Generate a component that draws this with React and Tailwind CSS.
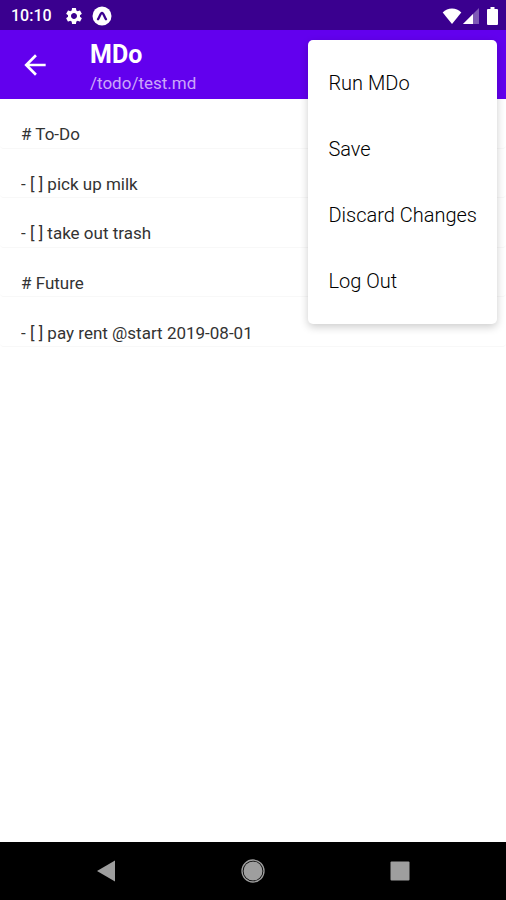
import { useState } from "react";
import { MdArrowBack, MdSettings } from "react-icons/md";

const initialLines = [
  "# To-Do",
  "- [ ] pick up milk",
  "- [ ] take out trash",
  "# Future",
  "- [ ] pay rent @start 2019-08-01",
];

const menuItems = ["Run MDo", "Save", "Discard Changes", "Log Out"];

const StatusBar = () => (
  <div className="flex h-[30px] items-center bg-[#3a008f] pl-[11px] pr-2 pt-px text-white">
    <span className="text-base font-medium leading-5">10:10</span>
    <MdSettings className="ml-3 size-5" />
    <svg viewBox="0 0 20 20" className="ml-2 size-5">
      <circle cx="10" cy="10" r="9.5" fill="white" />
      <path
        d="M6 13.2C7.600 11.400 8.300 7 10 7s2.400 4.400 4 6.200"
        fill="none"
        stroke="#3a008f"
        strokeWidth="2.400"
        strokeLinecap="round"
      />
    </svg>
    <svg viewBox="0 0 20 16" className="ml-auto h-4 w-5">
      <path d="M10 16 .7 4.4C3.200 2 6.500.6 10 .6s6.800 1.400 9.300 3.800z" fill="white" />
    </svg>
    <svg viewBox="0 0 16 16" className="ml-px h-4 w-4">
      <path d="M0 16 16 0v16z" fill="white" opacity="0.35" />
      <path d="M0 16 10 6v10z" fill="white" />
    </svg>
    <svg viewBox="0 0 11 18" className="ml-2 h-[18px] w-[11px]">
      <path d="M3.500 0h4v2H10a1 1 0 0 1 1 1v14a1 1 0 0 1-1 1H1a1 1 0 0 1-1-1V3a1 1 0 0 1 1-1h2.500z" fill="white" />
    </svg>
  </div>
);

const NavBar = () => (
  <nav className="flex h-[58px] items-center justify-center gap-[125px] bg-black text-[#9e9e9e]">
    <button type="button" aria-label="Back">
      <svg viewBox="0 0 20 22" className="h-[22px] w-5" fill="currentColor">
        <path d="M19 .500v21L1 11z" />
      </svg>
    </button>
    <button type="button" aria-label="Home">
      <svg viewBox="0 0 24 24" className="size-6" fill="currentColor">
        <circle cx="12" cy="12" r="11" fill="none" stroke="currentColor" strokeWidth="1.300" />
        <circle cx="12" cy="12" r="9.500" />
      </svg>
    </button>
    <button type="button" aria-label="Overview">
      <svg viewBox="0 0 20 20" className="size-5" fill="currentColor">
        <rect x="0.500" y="0.500" width="19" height="19" rx="1" />
      </svg>
    </button>
  </nav>
);

const App = () => {
  const [lines, setLines] = useState(initialLines);
  const [menuOpen, setMenuOpen] = useState(true);

  const updateLine = (index, value) => {
    setLines(lines.map((line, i) => (i === index ? value : line)));
  };

  const handleSelect = (item) => {
    if (item === "Discard Changes") {
      setLines(initialLines);
    }
    setMenuOpen(false);
  };

  return (
    <div className="relative flex min-h-screen flex-col bg-white font-[Roboto,sans-serif]">
      <StatusBar />

      <header className="flex h-[69px] items-center bg-[#6200ee] text-white">
        <button type="button" aria-label="Go back" className="ml-[19px] mr-[39px]">
          <MdArrowBack className="size-8" />
        </button>
        <div className="pt-2">
          <h1 className="text-[25px] font-bold leading-7">MDo</h1>
          <p className="text-[17px] leading-7 text-[#cba6fa]">/todo/test.md</p>
        </div>
      </header>

      <main className="flex-1">
        <ul className="grid min-h-[248px] grid-rows-5">
          {lines.map((line, i) => (
            <li key={i} className="flex rounded-[4px] border-b border-[#f8f8f8]">
              <input
                type="text"
                aria-label={`Line ${i + 1}`}
                value={line}
                onChange={(e) => updateLine(i, e.target.value)}
                className="w-full px-[21px] pt-[22px] text-[17px] leading-6 text-[#333] outline-none"
              />
            </li>
          ))}
        </ul>
      </main>

      {menuOpen && (
        <div
          role="menu"
          className="absolute right-[9px] top-10 rounded-[5px] bg-white py-[10px] shadow-[0_3px_8px_rgba(0,0,0,0.2)]"
        >
          {menuItems.map((item) => (
            <button
              key={item}
              type="button"
              role="menuitem"
              onClick={() => handleSelect(item)}
              className="block h-[66px] w-full px-5 text-left text-xl font-light text-black"
            >
              {item}
            </button>
          ))}
        </div>
      )}

      <NavBar />
    </div>
  );
};

export default App;
